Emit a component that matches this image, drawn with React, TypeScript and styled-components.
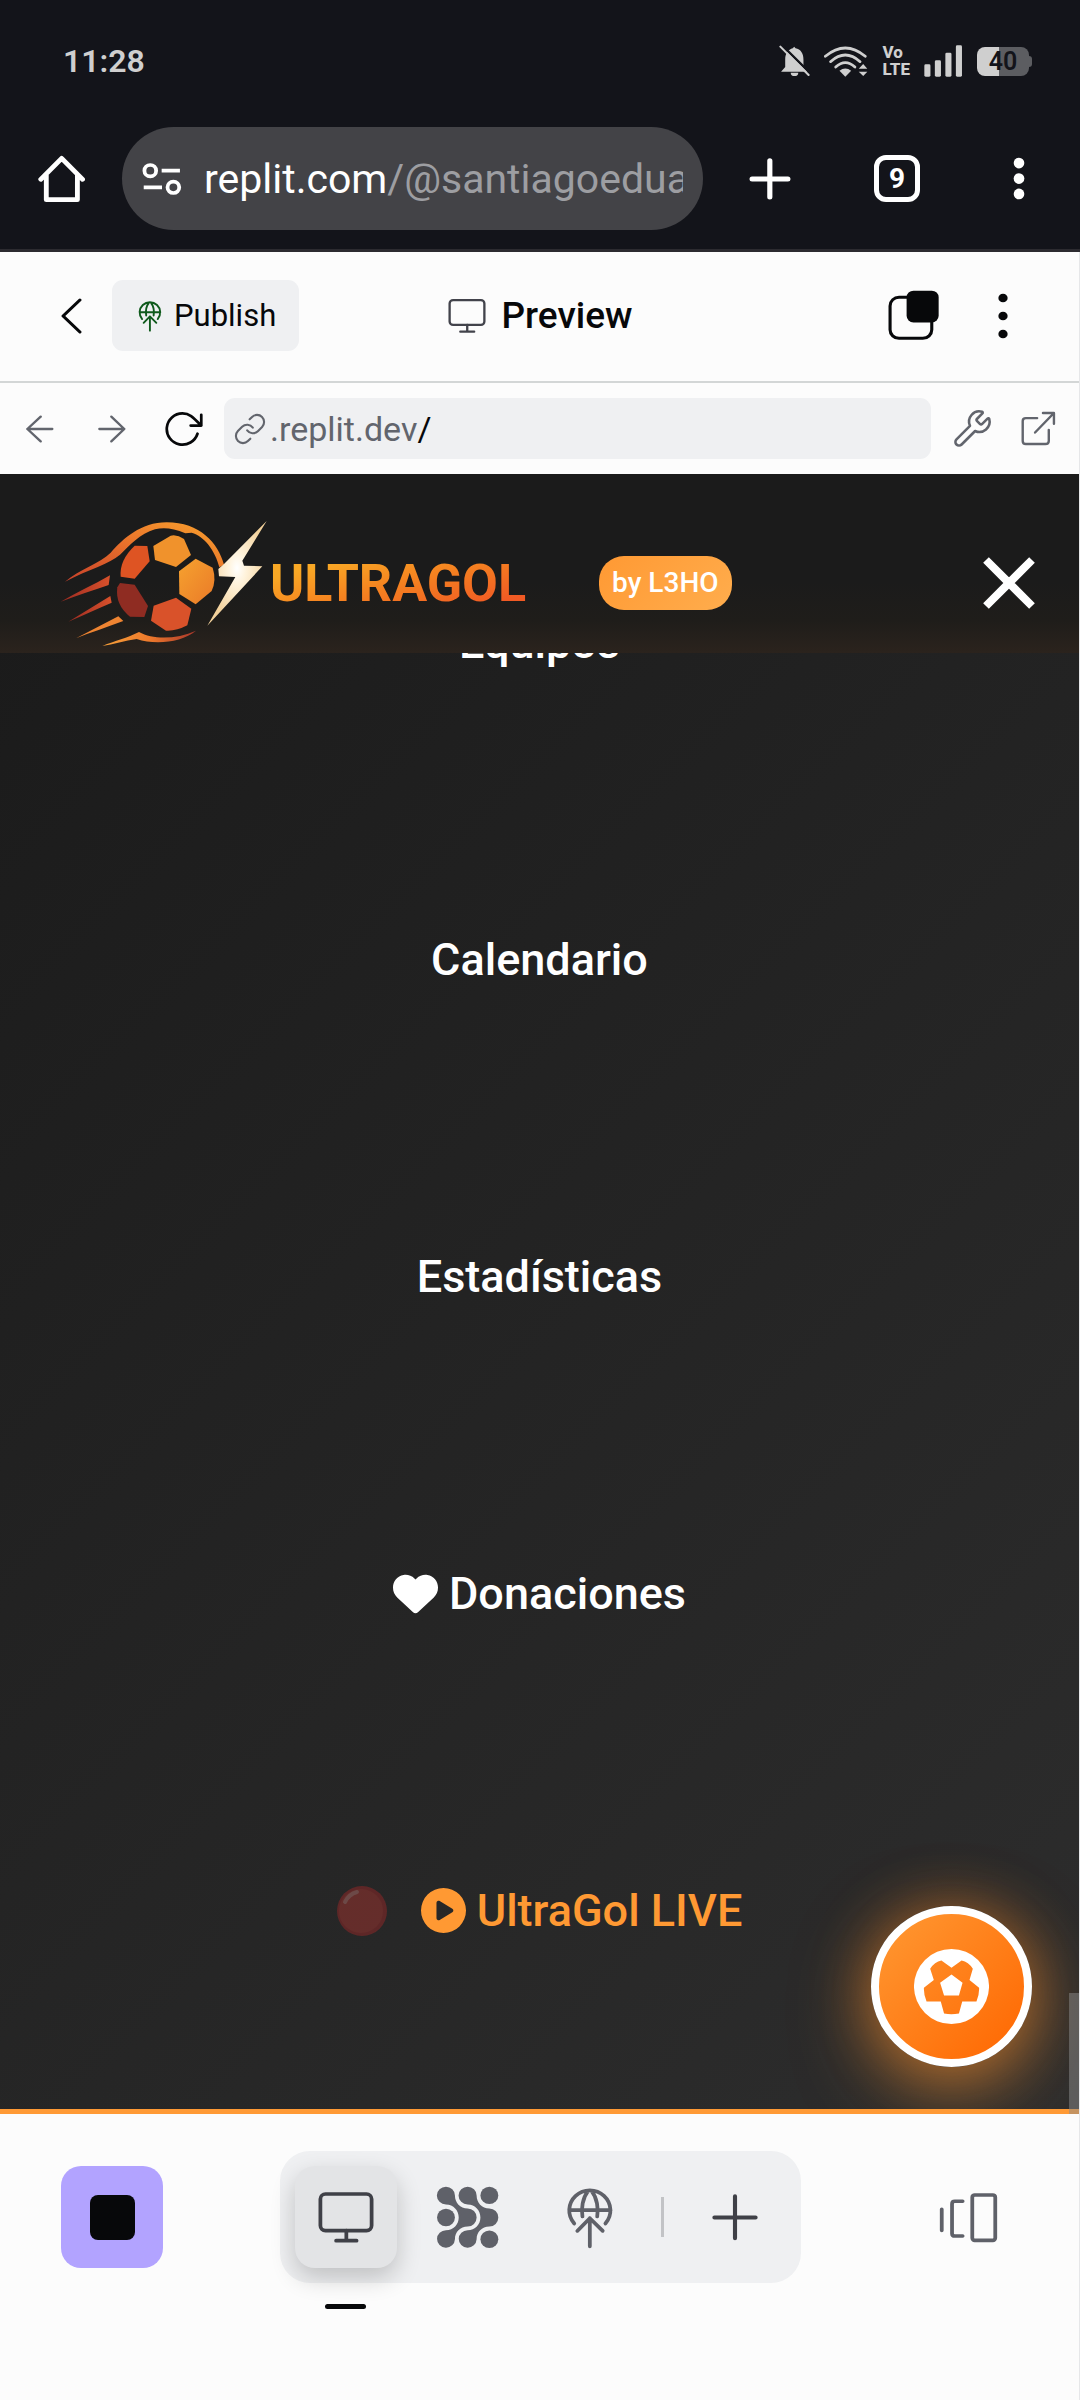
import React from "react";
import styled, { createGlobalStyle } from "styled-components";
import { FaHeart, FaCirclePlay } from "react-icons/fa6";
import { Link as LinkIcon, Wrench } from "lucide-react";

const GlobalStyle = createGlobalStyle`
  *, *::before, *::after { box-sizing: border-box; }
  body { margin: 0; background: #fcfcfc; font-family: Roboto, "Noto Sans", sans-serif; }
  button { border: 0; padding: 0; background: none; font: inherit; color: inherit; cursor: pointer; }
  a { color: inherit; text-decoration: none; }
  svg { display: block; flex: none; }
`;

const Screen = styled.div`
  min-height: 100vh;
  display: flex;
  flex-direction: column;
`;

/* ---------- phone and browser chrome ---------- */

const Chrome = styled.header`
  background: #13141a;
  border-bottom: 3px solid #2c2b30;
`;

const StatusBar = styled.div`
  height: 122px;
  padding: 0 48px 0 63px;
  display: flex;
  align-items: center;
  justify-content: space-between;
  color: #cfcfcf;
`;

const Clock = styled.time`
  font-size: 32px;
  font-weight: 600;
`;

const StatusIcons = styled.div`
  display: flex;
  align-items: center;
  gap: 14px;
`;

const Volte = styled.span`
  display: grid;
  font-size: 17px;
  line-height: 17px;
  font-weight: 800;
`;

const Battery = styled.span`
  position: relative;
  width: 52px;
  height: 29px;
  margin-right: 3px;
  border-radius: 8px;
  background: linear-gradient(90deg, #cfcfcf 42%, #5c5d61 42%);
  color: #13141a;
  font-size: 25px;
  line-height: 29px;
  font-weight: 600;
  text-align: center;
  &::after {
    content: "";
    position: absolute;
    left: 52px;
    top: 9px;
    width: 3px;
    height: 11px;
    border-radius: 0 3px 3px 0;
    background: #5c5d61;
  }
`;

const BrowserBar = styled.div`
  display: flex;
  align-items: center;
  padding: 5px 0 19px;
  color: #fff;
`;

const IconButton = styled.button<{ $width: number; $color?: string }>`
  width: ${(p) => p.$width}px;
  flex: none;
  align-self: stretch;
  display: flex;
  align-items: center;
  justify-content: center;
  color: ${(p) => p.$color ?? "inherit"};
`;

const Omnibox = styled.label`
  flex: 1;
  min-width: 0;
  height: 103px;
  padding: 0 20px;
  border-radius: 52px;
  background: #434347;
  display: flex;
  align-items: center;
  font-size: 41px;
`;

const OmniboxHost = styled.span`
  margin-left: 22px;
`;

const BareInput = styled.input<{ $color: string }>`
  flex: 1;
  min-width: 0;
  border: 0;
  padding: 0;
  outline: 0;
  background: none;
  font: inherit;
  color: ${(p) => p.$color};
`;

const TabCount = styled.span`
  width: 46px;
  height: 47px;
  border: 5px solid #fff;
  border-radius: 12px;
  font-size: 28px;
  line-height: 37px;
  font-weight: 700;
`;

/* ---------- workspace chrome ---------- */

const Workspace = styled.main`
  flex: 1;
  display: flex;
  flex-direction: column;
  background: #fcfcfc;
  border-right: 1px solid #e6e7e9;
  color: #07080a;
`;

const WorkspaceHeader = styled.div`
  display: grid;
  grid-template-columns: 1fr auto 1fr;
  padding: 28px 31px 30px;
  border-bottom: 2px solid #d3d6d6;
`;

const HeaderSide = styled.div<{ $end?: boolean }>`
  display: flex;
  justify-content: ${(p) => (p.$end ? "flex-end" : "flex-start")};
`;

const PublishButton = styled.button`
  height: 71px;
  padding: 0 23px 0 26px;
  border-radius: 11px;
  background: #eff0f2;
  display: flex;
  align-items: center;
  gap: 12px;
  font-size: 31px;
`;

const PaneTitle = styled.h1`
  margin: 0;
  display: flex;
  align-items: center;
  gap: 15px;
  font-size: 37px;
  font-weight: 500;
`;

const AddressRow = styled.div`
  display: flex;
  padding: 15px 8px 15px 4px;
  gap: 4px;
`;

const AddressGroup = styled.div<{ $inset?: number }>`
  display: flex;
  padding-left: ${(p) => p.$inset ?? 0}px;
`;

const AddressField = styled.label`
  flex: 1;
  min-width: 0;
  height: 61px;
  padding: 0 12px 0 9px;
  border-radius: 11px;
  background: #eff0f2;
  display: flex;
  align-items: center;
  font-size: 34px;
  color: #62656d;
`;

const AddressHost = styled.span`
  margin-left: 3px;
`;

/* ---------- previewed site ---------- */

const Site = styled.section`
  flex: 1;
  position: relative;
  display: grid;
  overflow: hidden;
  border-bottom: 5px solid #ff9a35;
  background: linear-gradient(135deg, #1a1a1a, #2d2d2d);
  color: #fff;
`;

const SiteHeader = styled.header`
  grid-area: 1 / 1;
  align-self: start;
  z-index: 1;
  height: 179px;
  padding: 39px 44px 0 60px;
  display: flex;
  align-items: center;
  background: linear-gradient(#1b1b1b 60%, #1f1d1a 82%, #2b231d);
`;

const Brand = styled.a`
  display: flex;
  align-items: center;
`;

const BrandName = styled.span`
  font-size: 52px;
  font-weight: 700;
  background: linear-gradient(165deg, #f9a825 20%, #f58220 50%, #f15a24 85%);
  background-clip: text;
  -webkit-background-clip: text;
  color: transparent;
`;

const Badge = styled.span`
  height: 54px;
  margin-left: 73px;
  padding: 0 13px;
  border-radius: 25px;
  background: linear-gradient(135deg, #ff9933, #ffad4d);
  font-size: 28px;
  line-height: 54px;
  font-weight: 500;
`;

const CloseButton = styled.button`
  margin-left: auto;
`;

const Menu = styled.ul`
  grid-area: 1 / 1;
  margin: 0;
  padding: 10px 0 40px;
  list-style: none;
  display: flex;
  flex-direction: column;
`;

const MenuItem = styled.li`
  flex: 1;
  min-height: 120px;
  display: flex;
  align-items: center;
  justify-content: center;
`;

const MenuLink = styled.a<{ $live?: boolean }>`
  display: flex;
  align-items: center;
  gap: 11px;
  font-size: 45px;
  font-weight: 500;
  color: ${(p) => (p.$live ? "#ff9933" : "#fff")};
`;

const LiveDot = styled.span`
  margin-right: 23px;
  opacity: 0.35;
`;

const BallButton = styled.button`
  position: absolute;
  right: 47px;
  bottom: 42px;
  width: 161px;
  height: 161px;
  border: 8px solid #fff;
  border-radius: 50%;
  background: linear-gradient(135deg, #ff9933, #ff6600);
  box-shadow: 0 22px 76px rgba(255, 153, 51, 0.5), 0 0 60px rgba(255, 130, 30, 0.4);
  display: flex;
  align-items: center;
  justify-content: center;
`;

const ScrollThumb = styled.div`
  position: absolute;
  right: 0;
  bottom: 0;
  width: 10px;
  height: 121px;
  background: rgba(139, 139, 139, 0.5);
`;

const SiteFrame = styled.div`
  flex: 1;
  display: flex;
  flex-direction: column;
  position: relative;
`;

/* ---------- bottom dock ---------- */

const BottomBar = styled.nav`
  display: flex;
  align-items: center;
  justify-content: space-between;
  padding: 37px 60px 117px 61px;
`;

const StopButton = styled.button`
  width: 102px;
  height: 102px;
  border-radius: 20px;
  background: #b2a3ff;
  display: flex;
  align-items: center;
  justify-content: center;
`;

const StopSquare = styled.span`
  width: 45px;
  height: 45px;
  border-radius: 8px;
  background: #07080a;
`;

const Dock = styled.div`
  display: flex;
  align-items: center;
  gap: 20px;
  padding: 15px;
  border-radius: 30px;
  background: #eff0f2;
`;

const DockButton = styled.button<{ $active?: boolean; $dark?: boolean }>`
  position: relative;
  width: 102px;
  height: 102px;
  border-radius: 20px;
  display: flex;
  align-items: center;
  justify-content: center;
  color: ${(p) => (p.$dark ? "#3f4047" : "#5f6169")};
  background: ${(p) => (p.$active ? "#e3e4e6" : "none")};
  box-shadow: ${(p) => (p.$active ? "0 10px 24px rgba(0, 0, 0, 0.2)" : "none")};
  &::after {
    content: "";
    display: ${(p) => (p.$active ? "block" : "none")};
    position: absolute;
    bottom: -41px;
    left: 50%;
    width: 41px;
    height: 5px;
    margin-left: -21px;
    border-radius: 3px;
    background: #07080a;
  }
`;

const DockDivider = styled.span`
  width: 3px;
  height: 40px;
  background: #c2c3c6;
`;

/* ---------- drawings ---------- */

interface DrawingProps {
  box: string;
  w: number;
  h: number;
  stroke?: number;
  children: React.ReactNode;
}

/* Line drawing when a stroke is given, filled drawing otherwise. */
const Drawing = ({ box, w, h, stroke, children }: DrawingProps) => (
  <svg
    viewBox={box}
    width={w}
    height={h}
    preserveAspectRatio="none"
    aria-hidden="true"
    fill={stroke ? "none" : "currentColor"}
    stroke={stroke ? "currentColor" : "none"}
    strokeWidth={stroke}
    strokeLinecap="round"
    strokeLinejoin="round"
  >
    {children}
  </svg>
);

const BellOff = () => (
  <Drawing box="697 136 90 96" w={31} h={32}>
    <path d="M703 216L715 202V180C715 161 724 150 737 146L741 141L745 146C760 149 768 161 768 180V202L782 216ZM731 219H753A11 10 0 0 1 731 219Z" />
    <path d="M707 138L790 223" stroke="#13141a" strokeWidth="7" />
    <path d="M701 141L783 226" stroke="currentColor" strokeWidth="6" strokeLinecap="round" />
  </Drawing>
);

const Wifi = () => (
  <Drawing box="821 136 128 96" w={44} h={32}>
    <g fill="none" stroke="currentColor" strokeWidth="8">
      <path d="M825 170Q883 120 941 170" />
      <path d="M840 186Q883 146 926 186" />
      <path d="M855 202Q883 176 911 202" />
    </g>
    <path d="M866 213Q883 200 900 213L883 231Z" />
    <path d="M917 216L935 186L952 216V224H917Z" fill="#13141a" />
    <path d="M922 207L935 193L947 207ZM922 216H947L935 229Z" />
  </Drawing>
);

const Signal = () => (
  <Drawing box="1114 137 115 96" w={39} h={32}>
    <rect x="1115" y="195" width="18" height="37" rx="4" />
    <rect x="1146" y="183" width="18" height="49" rx="4" />
    <rect x="1177" y="160" width="18" height="72" rx="4" />
    <rect x="1208" y="138" width="18" height="94" rx="4" />
  </Drawing>
);

const Home = () => (
  <Drawing box="110 464 136 144" w={47} h={48} stroke={14}>
    <path d="M118 537L178.500 474L239 537M134 522V598H224V522" />
  </Drawing>
);

const Tune = () => (
  <Drawing box="414 484 116 102" w={40} h={34} stroke={11}>
    <circle cx="438" cy="510" r="17" />
    <circle cx="505" cy="560" r="17" />
    <path strokeLinecap="butt" d="M471 510H524M419 560H472" />
  </Drawing>
);

const BrowserPlus = () => (
  <Drawing box="606 473 122 126" w={42} h={42} stroke={15}>
    <path d="M666.500 481V590M615 536H719" />
  </Drawing>
);

const BrowserDots = () => (
  <Drawing box="1374 472 36 128" w={12} h={43}>
    <circle cx="1392" cy="490" r="16" />
    <circle cx="1392" cy="536" r="16" />
    <circle cx="1392" cy="582" r="16" />
  </Drawing>
);

const Chevron = () => (
  <Drawing box="178 173 60 108" w={21} h={36} stroke={9}>
    <path d="M232 179L184 227L232 275" />
  </Drawing>
);

const GlobeUp = ({ w, h, stroke = 11 }: { w: number; h: number; stroke?: number }) => (
  <Drawing box="74 254 140 188" w={w} h={h} stroke={stroke}>
    <path d="M98 366A60 60 0 1 1 189 366M84 326H204M139 268C122 290 118 322 122 345M148 268C165 290 169 322 165 345" />
    <path d="M143.500 434V350M107 388L143.500 350L181 388" />
  </Drawing>
);

const Monitor = ({ w, h, stroke = 11 }: { w: number; h: number; stroke?: number }) => (
  <Drawing box="918 270 164 158" w={w} h={h} stroke={stroke}>
    <rect x="925" y="279" width="150" height="109" rx="15" />
    <path d="M1001 388V418M971 418H1031" />
  </Drawing>
);

const Windows = () => (
  <Drawing box="1008 148 148 154" w={51} h={51} stroke={9}>
    <rect x="1014" y="170" width="121" height="124" rx="26" />
    <rect x="1062" y="150" width="93" height="96" rx="20" fill="currentColor" stroke="none" />
  </Drawing>
);

const HeaderDots = () => (
  <Drawing box="1329 158 28 138" w={10} h={46}>
    <circle cx="1343" cy="173" r="13" />
    <circle cx="1343" cy="227" r="13" />
    <circle cx="1343" cy="281" r="13" />
  </Drawing>
);

const ArrowLeft = () => (
  <Drawing box="76 523 82 84" w={28} h={28} stroke={7}>
    <path d="M153 565H80M119 528L80 565L119 602" />
  </Drawing>
);

const ArrowRight = () => (
  <Drawing box="286 523 82 84" w={28} h={28} stroke={7}>
    <path d="M290 565H363M325 528L363 565L325 602" />
  </Drawing>
);

const Reload = () => (
  <Drawing box="481 512 114 106" w={39} h={36} stroke={8}>
    <path d="M576 579A46 46 0 1 1 532 519C553 519 562 529 587 555M587 523V555H556" />
  </Drawing>
);

const External = () => (
  <Drawing box="1394 513 102 104" w={35} h={35} stroke={7}>
    <path d="M1441 534H1408Q1399 534 1399 543V602Q1399 611 1408 611H1465Q1475 611 1475 602V569M1435 577L1490 519M1458 519H1490V551" />
  </Drawing>
);

const Dots = () => (
  <Drawing box="1266 256 183 188" w={63} h={63}>
    {[0, 63].map((dx) => (
      <path
        key={dx}
        transform={`translate(${dx} 0)`}
        d="M1295 258A26 26 0 0 1 1321 284C1321 306 1336 322 1358 323A26 27 0 0 1 1358 377C1336 378 1321 393 1321 415A26 26 0 1 1 1295 388C1317 388 1332 371 1332 350S1317 311 1295 311A26 26 0 0 1 1295 258Z"
      />
    ))}
    <circle cx="1295" cy="350" r="26" />
    <circle cx="1421" cy="284" r="26" />
    <circle cx="1421" cy="415" r="26" />
  </Drawing>
);

const DockPlus = () => (
  <Drawing box="498 280 134 140" w={46} h={47} stroke={12}>
    <path d="M565 287V412M505 350H625" />
  </Drawing>
);

const Panels = () => (
  <Drawing box="1156 272 172 154" w={59} h={51} stroke={11}>
    <path d="M1164 324V388M1225 300H1202Q1194 300 1194 308V397Q1194 405 1202 405H1225" />
    <rect x="1253" y="281" width="67" height="137" rx="7" />
  </Drawing>
);

const BrandMark = () => (
  <svg viewBox="60 90 630 378" width="210" height="126" aria-hidden="true">
    <defs>
      <linearGradient id="arc" x1="0" y1="1" x2="1" y2="0">
        <stop offset="0" stopColor="#c6402a" />
        <stop offset="0.5" stopColor="#e8702b" />
        <stop offset="1" stopColor="#f9a32d" />
      </linearGradient>
      <linearGradient id="patch" x1="0" y1="0" x2="1" y2="1">
        <stop offset="0" stopColor="#f6a22f" />
        <stop offset="1" stopColor="#ea7a28" />
      </linearGradient>
      <linearGradient id="ember" x1="0" y1="0" x2="1" y2="0">
        <stop offset="0" stopColor="#9c2a22" />
        <stop offset="1" stopColor="#d8512b" />
      </linearGradient>
      <linearGradient id="trail" x1="0" y1="0" x2="1" y2="0">
        <stop offset="0" stopColor="#f6a03a" />
        <stop offset="0.5" stopColor="#ee7a2c" />
        <stop offset="1" stopColor="#a8352a" />
      </linearGradient>
      <radialGradient id="bolt" cx="0.5" cy="0.45" r="0.5">
        <stop offset="0" stopColor="#ffffff" />
        <stop offset="0.3" stopColor="#fff3dc" />
        <stop offset="1" stopColor="#f3d29c" />
      </radialGradient>
    </defs>
    <path
      fill="url(#arc)"
      d="M75 275C120 236 180 220 212 188C250 146 302 97 380 97C480 97 535 160 552 224L538 232C526 182 492 138 455 128L436 130C400 114 370 112 345 118C300 130 268 168 240 194C208 222 150 236 75 275Z"
    />
    <path fill="#f0922c" d="M340 168L392 137Q412 133 432 147L453 195L408 231L345 210Z" />
    <path fill="url(#patch)" d="M417 244L467 206L518 233Q530 270 515 303L467 343L418 312Z" />
    <path fill="#d9522a" d="M341 347L408 323L454 356L442 406Q408 424 378 422L333 392Z" />
    <path fill="#8f2c22" d="M240 279L284 284L324 348L313 381L270 380Q225 345 232 292Z" />
    <path fill="#de5423" d="M284 167L322 168L329 214L284 266L242 260Q238 210 284 167Z" />
    <path fill="url(#ember)" d="M62 335C110 307 160 285 210 256L206 285C160 302 110 316 62 335Z" />
    <path fill="url(#ember)" d="M85 395L211 318L215 338C170 358 130 375 85 395Z" />
    <path fill="#ee8432" d="M108 445L235 379L250 393C200 412 150 428 108 445Z" />
    <path fill="url(#trail)" d="M187 468C225 452 262 444 297 426C340 450 410 448 468 422C425 458 345 465 290 447C255 452 220 464 187 468Z" />
    <path fill="url(#bolt)" d="M680 93L607 212L612 227L667 229L502 407L586 261L537 259L535 237L552 222Z" />
  </svg>
);

const Close = () => (
  <svg viewBox="0 0 52 52" width="52" height="52" aria-hidden="true">
    <path d="M3 3L49 49M49 3L3 49" stroke="#fff" strokeWidth="8" />
  </svg>
);

const RedBall = () => (
  <svg viewBox="0 0 50 50" width="50" height="50" aria-hidden="true">
    <circle cx="25" cy="25" r="25" fill="#c62828" />
    <circle cx="24" cy="25" r="22" fill="#d93a33" />
    <path d="M8 16Q12 8 20 6" stroke="#ef8a84" strokeWidth="4" strokeLinecap="round" fill="none" />
  </svg>
);

const Ball = () => (
  <svg viewBox="401 324 227 227" width="75" height="75" aria-hidden="true">
    <path
      fill="#fff"
      fillRule="evenodd"
      d="M514.500 324A113.500 113.500 0 1 0 514.500 551A113.500 113.500 0 1 0 514.500 324ZM514.500 381L545 359Q566 363 579 384L569 418L598 441Q599 463 590 483H547L537 519Q514 524 492 519L482 483H439Q430 463 431 441L461 418L450 384Q463 363 484 359ZM514.500 401L548 426L537 465H492L480 426Z"
    />
  </svg>
);

/* ---------- page ---------- */

const links = ["Equipos", "Calendario", "Estadísticas"];

export default function App() {
  return (
    <Screen>
      <GlobalStyle />
      <Chrome>
        <StatusBar>
          <Clock>11:28</Clock>
          <StatusIcons>
            <BellOff />
            <Wifi />
            <Volte>
              <span>Vo</span>
              <span>LTE</span>
            </Volte>
            <Signal />
            <Battery>40</Battery>
          </StatusIcons>
        </StatusBar>
        <BrowserBar>
          <IconButton $width={122} aria-label="Home"><Home /></IconButton>
          <Omnibox>
            <Tune />
            <OmniboxHost>replit.com</OmniboxHost>
            <BareInput $color="#9d9ea2" aria-label="Address" defaultValue="/@santiagoeduardo" />
          </Omnibox>
          <IconButton $width={133} aria-label="New tab"><BrowserPlus /></IconButton>
          <IconButton $width={122} aria-label="Tabs"><TabCount>9</TabCount></IconButton>
          <IconButton $width={122} aria-label="More"><BrowserDots /></IconButton>
        </BrowserBar>
      </Chrome>

      <Workspace>
        <WorkspaceHeader>
          <HeaderSide>
            <IconButton $width={81} aria-label="Back"><Chevron /></IconButton>
            <PublishButton>
              <IconButton as="span" $width={24} $color="#0f5a1c"><GlobeUp w={24} h={32} /></IconButton>
              Publish
            </PublishButton>
          </HeaderSide>
          <PaneTitle>
            <IconButton as="span" $width={40} $color="#42434b"><Monitor w={38} h={36} stroke={10} /></IconButton>
            Preview
          </PaneTitle>
          <HeaderSide $end>
            <IconButton $width={90} aria-label="Windows"><Windows /></IconButton>
            <IconButton $width={90} aria-label="Menu"><HeaderDots /></IconButton>
          </HeaderSide>
        </WorkspaceHeader>

        <AddressRow>
          <AddressGroup>
            <IconButton $width={72} $color="#62656d" aria-label="Previous page"><ArrowLeft /></IconButton>
            <IconButton $width={72} $color="#62656d" aria-label="Next page"><ArrowRight /></IconButton>
            <IconButton $width={72} aria-label="Reload"><Reload /></IconButton>
          </AddressGroup>
          <AddressField>
            <LinkIcon size={34} strokeWidth={1.5} aria-hidden="true" />
            <AddressHost>.replit.dev</AddressHost>
            <BareInput $color="#07080a" aria-label="Path" defaultValue="/" />
          </AddressField>
          <AddressGroup $inset={4}>
            <IconButton $width={66} $color="#62656d" aria-label="Developer tools">
              <Wrench size={41} strokeWidth={1.5} />
            </IconButton>
            <IconButton $width={66} $color="#62656d" aria-label="Open in new tab"><External /></IconButton>
          </AddressGroup>
        </AddressRow>

        <SiteFrame>
          <Site>
            <SiteHeader>
              <Brand href="#inicio">
                <BrandMark />
                <BrandName>ULTRAGOL</BrandName>
              </Brand>
              <Badge>by L3HO</Badge>
              <CloseButton aria-label="Cerrar"><Close /></CloseButton>
            </SiteHeader>
            <Menu>
              {links.map((label) => (
                <MenuItem key={label}>
                  <MenuLink href="#menu">{label}</MenuLink>
                </MenuItem>
              ))}
              <MenuItem>
                <MenuLink href="#donaciones"><FaHeart aria-hidden="true" />Donaciones</MenuLink>
              </MenuItem>
              <MenuItem>
                <MenuLink href="#live" $live>
                  <LiveDot><RedBall /></LiveDot>
                  <FaCirclePlay aria-hidden="true" />
                  UltraGol LIVE
                </MenuLink>
              </MenuItem>
            </Menu>
            <BallButton aria-label="Partidos"><Ball /></BallButton>
          </Site>
          <ScrollThumb />
        </SiteFrame>

        <BottomBar>
          <StopButton aria-label="Stop"><StopSquare /></StopButton>
          <Dock>
            <DockButton $active $dark aria-label="Preview"><Monitor w={56} h={53} /></DockButton>
            <DockButton aria-label="Agent"><Dots /></DockButton>
            <DockButton aria-label="Publishing"><GlobeUp w={48} h={63} /></DockButton>
            <DockDivider />
            <DockButton $dark aria-label="New pane"><DockPlus /></DockButton>
          </Dock>
          <DockButton aria-label="Panels"><Panels /></DockButton>
        </BottomBar>
      </Workspace>
    </Screen>
  );
}
